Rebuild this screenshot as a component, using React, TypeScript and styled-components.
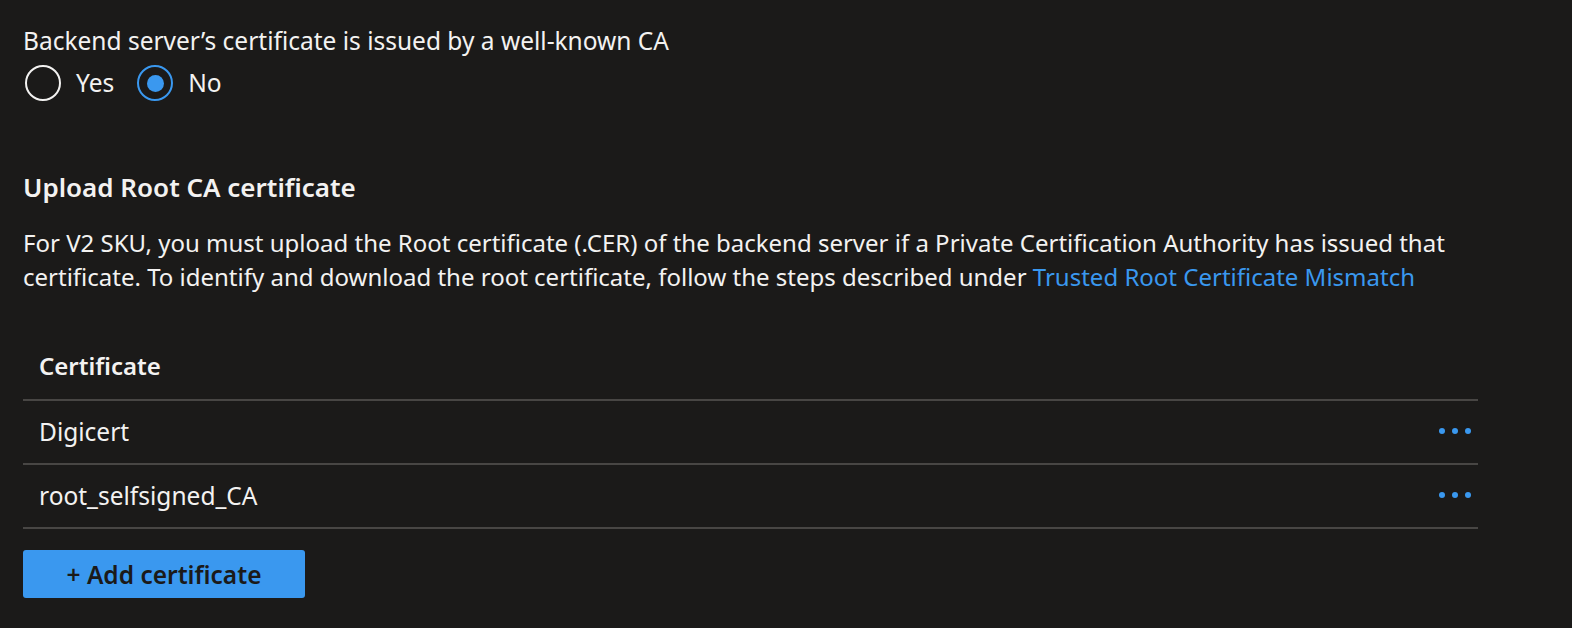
import styled, { createGlobalStyle } from "styled-components";

const GlobalStyle = createGlobalStyle`
  html, body {
    margin: 0;
    padding: 0;
    background: #1b1a19;
  }
  body {
    font-family: "Noto Sans", "Open Sans", sans-serif;
    color: #f3f2f1;
  }
`;

const Page = styled.div`
  width: 1572px;
  height: 628px;
  box-sizing: border-box;
  padding: 24px 0 0 23px;
  font-size: 24.5px;
  line-height: 34px;
  overflow: hidden;
`;

const Label = styled.div`
  height: 34px;
`;

const RadioGroup = styled.div`
  display: flex;
  align-items: center;
  height: 36px;
  margin-top: 7px;
  padding-left: 2px;
`;

const RadioOption = styled.label`
  display: flex;
  align-items: center;
  gap: 15px;
  margin-right: 23px;
`;

const RadioCircle = styled.span<{ $checked?: boolean }>`
  box-sizing: border-box;
  width: 36px;
  height: 36px;
  border-radius: 50%;
  border: 2.5px solid ${(p) => (p.$checked ? "#3a98ef" : "#f3f2f1")};
  display: flex;
  align-items: center;
  justify-content: center;

  &::after {
    content: "";
    display: ${(p) => (p.$checked ? "block" : "none")};
    width: 17px;
    height: 17px;
    border-radius: 50%;
    background: #3a98ef;
  }
`;

const Heading = styled.h2`
  margin: 69px 0 0;
  font-size: 26px;
  font-weight: 600;
  line-height: 34px;
`;

const Paragraph = styled.p`
  margin: 22px 0 0;
  font-size: 24px;
  line-height: 34px;
`;

const Link = styled.a`
  color: #3a98ef;
  text-decoration: none;
`;

const Table = styled.div`
  width: 1455px;
  margin-top: 38px;
`;

const Row = styled.div<{ $header?: boolean }>`
  display: flex;
  align-items: center;
  justify-content: space-between;
  height: ${(p) => (p.$header ? 67 : 62)}px;
  padding: 0 7px 0 16px;
  border-bottom: 2px solid #484644;
  font-size: ${(p) => (p.$header ? 24 : 24.5)}px;
  font-weight: ${(p) => (p.$header ? 600 : 400)};
`;

const Dots = styled.span`
  display: flex;
  gap: 7px;
  margin-top: -2px;

  i {
    display: block;
    width: 6px;
    height: 6px;
    border-radius: 50%;
    background: #3a98ef;
  }
`;

const AddButton = styled.button`
  margin-top: 21px;
  width: 282px;
  height: 48px;
  border: none;
  border-radius: 3px;
  background: #3a98ef;
  color: #1b1a19;
  font-family: inherit;
  font-size: 24.5px;
  font-weight: 600;
  cursor: pointer;
`;

const certificates = ["Digicert", "root_selfsigned_CA"];

export default function App() {
  return (
    <>
      <GlobalStyle />
      <Page>
        <Label>Backend server’s certificate is issued by a well-known CA</Label>
        <RadioGroup>
          <RadioOption>
            <RadioCircle />
            Yes
          </RadioOption>
          <RadioOption>
            <RadioCircle $checked />
            No
          </RadioOption>
        </RadioGroup>

        <Heading>Upload Root CA certificate</Heading>
        <Paragraph>
          For V2 SKU, you must upload the Root certificate (.CER) of the backend server if a Private
          Certification Authority has issued that
          <br />
          certificate. To identify and download the root certificate, follow the steps described under{" "}
          <Link href="#">Trusted Root Certificate Mismatch</Link>
        </Paragraph>

        <Table>
          <Row $header>Certificate</Row>
          {certificates.map((name) => (
            <Row key={name}>
              {name}
              <Dots>
                <i />
                <i />
                <i />
              </Dots>
            </Row>
          ))}
        </Table>

        <AddButton>+ Add certificate</AddButton>
      </Page>
    </>
  );
}
